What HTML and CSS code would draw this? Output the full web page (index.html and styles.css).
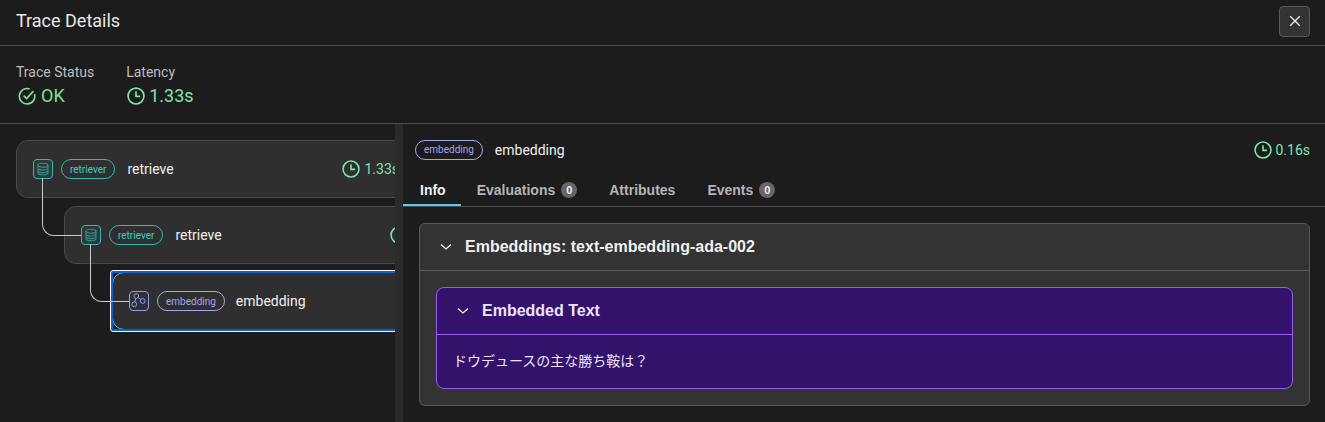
FILE: index.html
```html
<!DOCTYPE html>
<html lang="en">
<head>
<meta charset="utf-8">
<title>Trace Details</title>
<link rel="stylesheet" href="styles.css">
</head>
<body>
<div class="dialog">
  <header class="title-bar">
    <h1 class="title">Trace Details</h1>
    <button class="close" aria-label="Close">
      <svg viewBox="0 0 16 16" class="close-icon"><path d="M3.2 3.2l9.6 9.6M12.8 3.2l-9.6 9.6"/></svg>
    </button>
  </header>
  <section class="stats">
    <div class="stat">
      <div class="stat-label">Trace Status</div>
      <div class="stat-value ok">
        <svg viewBox="0 0 24 24" class="stat-icon"><path d="M22 9.5A10.3 10.3 0 1 1 15.5 2.6"/><path d="M7.5 11.5l4 4L20.5 5.5"/></svg>OK
      </div>
    </div>
    <div class="stat">
      <div class="stat-label">Latency</div>
      <div class="stat-value latency">
        <svg viewBox="0 0 24 24" class="stat-icon"><circle cx="12" cy="12" r="10.6"/><path d="M12 5.5V12.5H17.5"/></svg>1.33s
      </div>
    </div>
  </section>
  <div class="panels">
    <aside class="tree-panel">
      <ul class="tree">
        <li class="tree-item">
          <div class="node">
            <span class="span-icon teal"><svg viewBox="0 0 14 14" class="db"><ellipse cx="7" cy="3.2" rx="5" ry="2"/><path d="M2 3.2v7.6c0 1.1 2.2 2 5 2s5-.9 5-2V3.2M2 6c0 1.1 2.2 2 5 2s5-.9 5-2M2 8.6c0 1.1 2.2 2 5 2s5-.9 5-2"/></svg></span>
            <span class="pill teal">retriever</span>
            <span class="node-name">retrieve</span>
            <span class="node-latency"><svg viewBox="0 0 24 24" class="clock"><circle cx="12" cy="12" r="10.6"/><path d="M12 5.5V12.5H17.5"/></svg>1.33s</span>
          </div>
          <ul class="tree nested">
            <li class="tree-item">
              <span class="link"></span>
              <div class="node">
                <span class="span-icon teal"><svg viewBox="0 0 14 14" class="db"><ellipse cx="7" cy="3.2" rx="5" ry="2"/><path d="M2 3.2v7.6c0 1.1 2.2 2 5 2s5-.9 5-2V3.2M2 6c0 1.1 2.2 2 5 2s5-.9 5-2M2 8.6c0 1.1 2.2 2 5 2s5-.9 5-2"/></svg></span>
                <span class="pill teal">retriever</span>
                <span class="node-name">retrieve</span>
                <span class="node-latency"><svg viewBox="0 0 24 24" class="clock"><circle cx="12" cy="12" r="10.6"/><path d="M12 5.5V12.5H17.5"/></svg>1.33s</span>
              </div>
              <ul class="tree nested">
                <li class="tree-item">
                  <span class="link"></span>
                  <div class="node selected">
                    <span class="span-icon violet"><svg viewBox="0 0 18 18" class="graph"><circle cx="6.3" cy="4" r="2.4"/><circle cx="4.3" cy="12.3" r="2.4"/><circle cx="12.7" cy="9" r="2.4"/><path d="M5.8 6.4l-1 3.5M8.2 5.5l2.6 2"/></svg></span>
                    <span class="pill violet">embedding</span>
                    <span class="node-name">embedding</span>
                  </div>
                </li>
              </ul>
            </li>
          </ul>
        </li>
      </ul>
    </aside>
    <div class="splitter"></div>
    <main class="detail">
      <div class="detail-head">
        <span class="pill violet">embedding</span>
        <span class="node-name">embedding</span>
        <span class="detail-latency"><svg viewBox="0 0 24 24" class="clock"><circle cx="12" cy="12" r="10.6"/><path d="M12 5.5V12.5H17.5"/></svg>0.16s</span>
      </div>
      <nav class="tabs">
        <span class="tab active">Info</span>
        <span class="tab">Evaluations<span class="count">0</span></span>
        <span class="tab">Attributes</span>
        <span class="tab">Events<span class="count">0</span></span>
      </nav>
      <section class="card">
        <div class="card-head">
          <svg viewBox="0 0 12 12" class="chevron"><path d="M1 3.5L6 8l5-4.5"/></svg>
          <h2 class="card-title">Embeddings: text-embedding-ada-002</h2>
        </div>
        <div class="card-body">
          <section class="inner">
            <div class="inner-head">
              <svg viewBox="0 0 12 12" class="chevron"><path d="M1 3.5L6 8l5-4.5"/></svg>
              <h3 class="card-title">Embedded Text</h3>
            </div>
            <p class="inner-text">ドウデュースの主な勝ち鞍は？</p>
          </section>
        </div>
      </section>
    </main>
  </div>
</div>
</body>
</html>
```

FILE: styles.css
```css
* { box-sizing: border-box; }
html, body { margin: 0; height: 100%; }
body {
  background: #1c1c1c;
  color: #f0f0f0;
  font-family: Roboto, "Noto Sans CJK JP", sans-serif;
  overflow: hidden;
}
.dialog { height: 422px; display: flex; flex-direction: column; }
.title-bar {
  height: 46px;
  flex: none;
  display: flex;
  align-items: center;
  justify-content: space-between;
  padding: 0 15px 3px 16px;
  border-bottom: 1px solid #4a4a4a;
}
.title { margin: 0 0 1px; font-size: 18px; line-height: 22px; font-weight: 400; color: #e8e8e8; }
.close {
  width: 31px;
  height: 31px;
  padding: 0;
  display: flex;
  align-items: center;
  justify-content: center;
  background: #333;
  border: 1px solid #5a5a5a;
  border-radius: 4px;
}
.close-icon { width: 16px; height: 16px; fill: none; stroke: #eee; stroke-width: 1.3; }
.stats {
  height: 78px;
  flex: none;
  display: flex;
  gap: 32px;
  padding: 18px 16px 0;
  border-bottom: 1px solid #4a4a4a;
}
.stat-label { font-size: 14px; line-height: 17px; color: #bdbdbd; }
.stat-value {
  display: flex;
  align-items: center;
  margin-top: 4px;
  font-size: 18px;
  line-height: 22px;
}
.stat-value.ok { color: #7fe08e; gap: 5px; }
.stat-value.ok .stat-icon { margin-left: 2px; }
.stat-value.latency { color: #7fe3b0; gap: 4px; }
.stat-value.latency .stat-icon { margin-left: 1px; }
.stat-icon { width: 18px; height: 18px; fill: none; stroke: currentColor; stroke-width: 2.2; }
.panels { flex: 1; display: flex; min-height: 0; }
.tree-panel { width: 395px; flex: none; overflow: hidden; padding: 16px 0 0 16px; }
.splitter { width: 8px; flex: none; background: #2b2b2b; }
.tree { list-style: none; margin: 0; padding: 0; }
.tree.nested { padding-left: 48px; }
.tree-item { position: relative; }
.nested > .tree-item { margin-top: 8px; }
.link {
  position: absolute;
  z-index: 1;
  left: -22px;
  top: -28px;
  width: 39px;
  height: 58px;
  border-left: 1px solid #c8c8c8;
  border-bottom: 1px solid #c8c8c8;
  border-bottom-left-radius: 12px;
}
.node {
  position: relative;
  width: 400px;
  height: 58px;
  display: flex;
  align-items: center;
  padding: 0 16px;
  background: #2f2f2f;
  border: 1px solid #4a4a4a;
  border-radius: 12px;
}
.node.selected { border-color: #5ec8f5; }
.node.selected::before {
  content: "";
  position: absolute;
  inset: -3px;
  border: 1px solid #fff;
  border-radius: 3px;
  box-shadow: inset 0 0 0 2px #0b62cc;
  pointer-events: none;
}
.node.selected .pill { margin-right: -1px; }
.span-icon {
  width: 20px;
  height: 20px;
  flex: none;
  display: flex;
  align-items: center;
  justify-content: center;
  border: 1px solid;
  border-radius: 4px;
  background: #2a3a3a;
}
.span-icon.teal { color: #35b8b0; }
.span-icon.violet { color: #9a9ae6; background: #2f2f38; }
.db { width: 14px; height: 14px; fill: none; stroke: #3b8f8a; stroke-width: 1.1; }
.graph { width: 18px; height: 18px; fill: none; stroke: currentColor; stroke-width: 1; }
.pill {
  height: 20px;
  flex: none;
  display: inline-flex;
  align-items: center;
  padding: 0 8px;
  margin-left: 8px;
  font-size: 10px;
  border: 1px solid;
  border-radius: 10px;
}
.pill.teal { color: #3ccfc4; border-color: #35b8b0; }
.pill.violet { color: #a5a5f0; border-color: #a5a5f0; }
.node-name { margin-left: 12px; font-size: 14px; color: #f0f0f0; }
.node-latency, .detail-latency {
  display: flex;
  align-items: center;
  gap: 4px;
  margin-left: auto;
  font-size: 14px;
  color: #7fe3b0;
}
.detail-latency { gap: 3px; }
.clock { width: 18px; height: 18px; fill: none; stroke: currentColor; stroke-width: 2.1; }
.detail { flex: 1; min-width: 0; display: flex; flex-direction: column; }
.detail-head {
  height: 51px;
  flex: none;
  display: flex;
  align-items: center;
  padding: 0 15px 0 12px;
}
.detail-head .pill { margin-left: 0; }
.tabs {
  height: 32px;
  flex: none;
  display: flex;
  border-bottom: 1px solid #4a4a4a;
}
.tab {
  display: flex;
  align-items: center;
  padding: 0 16px 2px;
  font-family: "Liberation Sans", sans-serif;
  font-size: 14px;
  font-weight: 700;
  color: #b5b5b5;
}
.tab.active { color: #f0f0f0; box-shadow: inset 0 -2px 0 #5ec8f5; padding: 0 15px 2px 17px; }
.count {
  width: 16px;
  height: 16px;
  margin-left: 6px;
  border-radius: 50%;
  background: #666;
  color: #eee;
  font-size: 11px;
  line-height: 16px;
  text-align: center;
}
.card {
  margin: 16px 15px 0 16px;
  background: #333;
  border: 1px solid #5a5a5a;
  border-radius: 6px;
}
.card-head {
  height: 47px;
  display: flex;
  align-items: center;
  padding: 0 0 1px 20px;
  border-bottom: 1px solid #5a5a5a;
}
.chevron { width: 12px; height: 12px; flex: none; margin-right: 13px; fill: none; stroke: #eee; stroke-width: 1.3; }
.card-title { margin: 0; font-family: "Liberation Sans", sans-serif; font-size: 16px; font-weight: 700; color: #f0f0f0; }
.card-body { padding: 16px; }
.inner {
  background: #33126b;
  border: 1px solid #9a5cf0;
  border-radius: 8px;
}
.inner-head {
  height: 47px;
  display: flex;
  align-items: center;
  padding: 0 0 1px 20px;
  border-bottom: 1px solid #9a5cf0;
}
.inner-head .card-title { color: #ece4fa; }
.inner-text { margin: 0; padding: 16px; font-size: 14px; line-height: 21px; color: #ece4fa; }
```
